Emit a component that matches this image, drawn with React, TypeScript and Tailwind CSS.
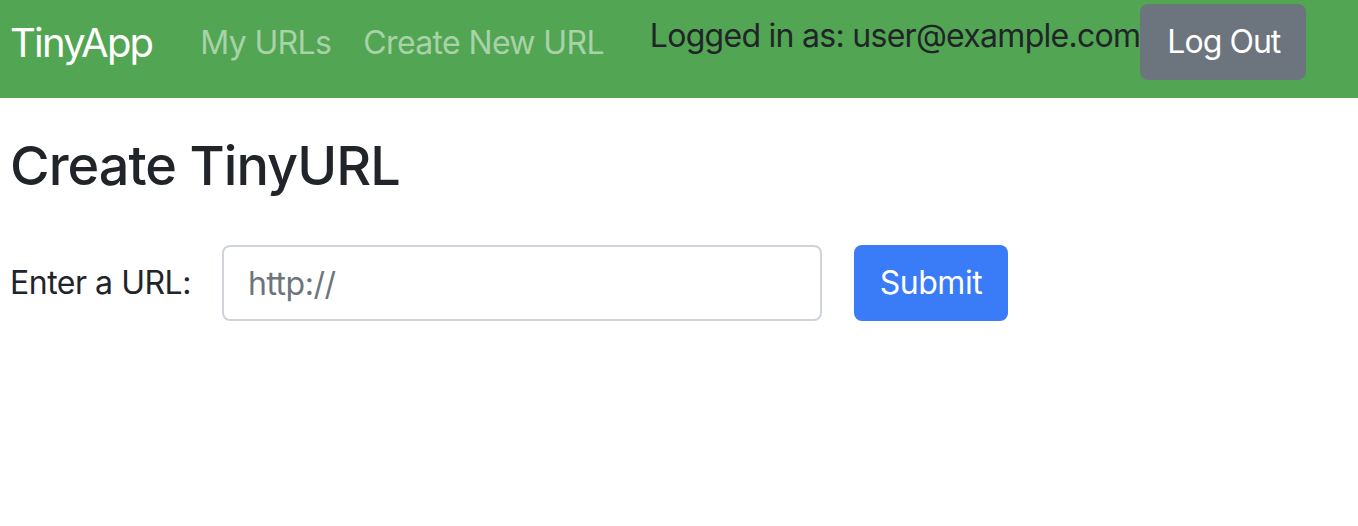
export default function App() {
  return (
    <div className="min-h-screen bg-white text-[#212529] font-['Inter',sans-serif] tracking-[-0.03em]">
      <nav className="flex h-[98px] items-start whitespace-nowrap bg-[#52a552] px-[10px]">
        <a href="#" className="mt-[13px] mr-[32px] shrink-0 text-[40px] leading-[60px] tracking-[-0.045em] text-white">
          TinyApp
        </a>
        <div className="mt-[19px] flex shrink-0 tracking-[-0.04em]">
          <a href="#" className="px-[16px] text-[32px] leading-[48px] text-white/50">
            My URLs
          </a>
          <a href="#" className="px-[16px] text-[32px] leading-[48px] text-white/50">
            Create New URL
          </a>
        </div>
        <div className="ml-[30px] flex shrink-0 items-start tracking-[-0.045em]">
          <span className="mt-[12px] text-[32px] leading-[48px] text-[#212529]">
            Logged in as: user@example.com
          </span>
          <button className="mt-[4px] h-[76px] rounded-[8px] bg-[#6c757d] pl-[27px] pr-[26px] text-[32px] tracking-[-0.03em] text-white">
            Log Out
          </button>
        </div>
      </nav>

      <main className="px-[10px]">
        <h1 className="mt-[35px] mb-[46px] text-[54px] leading-[66px] font-medium tracking-[-0.018em]">
          Create TinyURL
        </h1>
        <form className="flex items-center" onSubmit={(e) => e.preventDefault()}>
          <label htmlFor="longURL" className="text-[32px] leading-[48px]">
            Enter a URL:
          </label>
          <input
            id="longURL"
            type="text"
            placeholder="http://"
            className="ml-[31px] h-[76px] w-[600px] rounded-[8px] border-2 border-[#ced4da] px-[24px] text-[32px] placeholder:text-[#6c757d] outline-none"
          />
          <button
            type="submit"
            className="ml-[32px] h-[76px] w-[154px] rounded-[8px] bg-[#3a7bf7] text-[32px] text-white"
          >
            Submit
          </button>
        </form>
      </main>
    </div>
  );
}
